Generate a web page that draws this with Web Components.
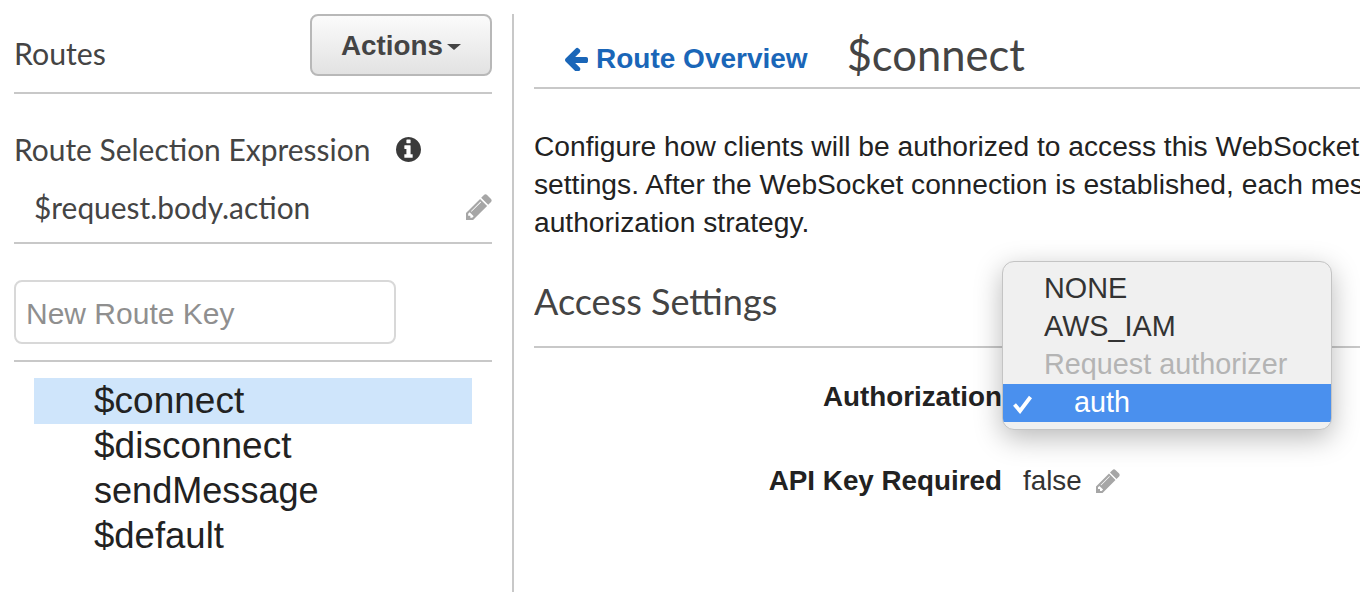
<!DOCTYPE html>
<html><head><meta charset="utf-8">
<style>
html,body{margin:0;padding:0;background:#fff;height:592px;overflow:hidden}
body{font-family:"Liberation Sans",Arial,sans-serif;color:#222}
</style></head>
<body>
<routes-app>
  <route-sidebar slot="side"></route-sidebar>
  <route-detail slot="main"></route-detail>
</routes-app>
<script>
const ICONS={
 pencil:'M491 1536l91-91-235-235-91 91v107h128v128h107zm523-928q0-22-22-22-10 0-17 7l-542 542q-7 7-7 17 0 22 22 22 10 0 17-7l542-542q7-7 7-17zm-54-192l416 416-832 832h-416v-416zm683 96q0 53-37 90l-166 166-416-416 166-165q36-38 90-38 53 0 91 38l235 234q37 39 37 91z',
 info:'M1152 1376v-160q0-14-9-23t-23-9h-96v-512q0-14-9-23t-23-9h-320q-14 0-23 9t-9 23v160q0 14 9 23t23 9h96v320h-96q-14 0-23 9t-9 23v160q0 14 9 23t23 9h448q14 0 23-9t9-23zm-128-896v-160q0-14-9-23t-23-9h-192q-14 0-23 9t-9 23v160q0 14 9 23t23 9h192q14 0 23-9t9-23zm640 416q0 209-103 385.5t-279.5 279.5-385.5 103-385.5-103-279.5-279.5-103-385.5 103-385.5 279.5-279.5 385.5-103 385.5 103 279.5 279.5 103 385.5z',
 left:'M1664 896v128q0 53-32.5 90.5t-84.5 37.5h-704l293 294q38 36 38 90t-38 90l-75 76q-37 37-90 37-52 0-91-37l-651-652q-37-37-37-90 0-52 37-91l651-650q38-38 91-38 52 0 90 38l75 74q38 38 38 91t-38 91l-293 293h704q52 0 84.5 37.5t32.5 90.5z'
};
class FaIcon extends HTMLElement{
 connectedCallback(){
  const s=this.getAttribute('size')||24,c=this.getAttribute('color')||'#a6a6a6',n=this.getAttribute('name');
  this.attachShadow({mode:'open'}).innerHTML=`<style>:host{display:inline-flex;flex:none;width:${s}px;height:${s}px}svg{display:block;width:100%;height:100%}</style><svg viewBox="128 128 1536 1536"><path fill="${c}" d="${ICONS[n]}"/></svg>`;
 }
}
customElements.define('fa-icon',FaIcon);

class RoutesApp extends HTMLElement{
 constructor(){super();this.attachShadow({mode:'open'}).innerHTML=`<style>
 :host{display:flex;height:578px;padding-top:14px;overflow:hidden;width:1360px}
 .side{flex:none;width:478px;margin-left:14px;padding-right:20px;border-right:2px solid #c8c8c8;height:578px}
 .main{flex:1;min-width:0;padding-left:20px}
 </style><div class="side"><slot name="side"></slot></div><div class="main"><slot name="main"></slot></div>`;}
}
customElements.define('routes-app',RoutesApp);

class ActionsButton extends HTMLElement{
 constructor(){super();this.attachShadow({mode:'open'}).innerHTML=`<style>
 :host{display:flex;align-items:center;justify-content:center;gap:4px;box-sizing:border-box;width:182px;height:62px;padding-top:2px;
  border:2px solid #b8b8b8;border-radius:8px;background:linear-gradient(#fbfbfb,#e2e2e2);
  font:bold 27.8px "Liberation Sans",sans-serif;color:#444}
 i{width:0;height:0;border:7.5px solid transparent;border-top:6px solid #444;border-bottom:0;margin-top:2px}
 </style><slot></slot><i></i>`;}
}
customElements.define('actions-button',ActionsButton);

class RouteSidebar extends HTMLElement{
 constructor(){super();this.attachShadow({mode:'open'}).innerHTML=`<style>
 :host{display:block;color:#444;font-family:Lato,sans-serif}
 .top{display:flex;justify-content:space-between;height:78px;border-bottom:2px solid #c8c8c8;}
 .title{font-size:30.3px;line-height:36px;margin-top:21px}
 .rse{display:flex;align-items:center;font-size:29.95px;line-height:36px;margin-top:37px;gap:26px}
 .val{display:flex;justify-content:space-between;align-items:center;height:40px;padding-left:20px;margin-top:20px;font-size:29.9px;padding-bottom:15px;border-bottom:2px solid #c8c8c8}
 .newkey{box-sizing:border-box;display:flex;align-items:center;width:382px;height:64px;margin-top:36px;padding:3px 10px 0;border:2px solid #d8d8d8;border-radius:8px;font:30px "Liberation Sans",sans-serif;color:#8f8f8f}
 .sep{border-bottom:2px solid #c8c8c8;margin-top:16px}
 ul{list-style:none;margin:16px 20px 0;padding:0;font:36.5px/45px "Liberation Sans",sans-serif;color:#222}
 li{padding-left:60px;height:45px}
 li.on{background:#cfe5fb;height:46px;margin-bottom:-1px}
 .w{font-size:37px}
 .n{font-size:36.1px}
 </style>
 <div class="top"><div class="title">Routes</div><actions-button>Actions</actions-button></div>
 <div class="rse"><span>Route Selection Expression</span><fa-icon name="info" size="25" color="#3a3a3a"></fa-icon></div>
 <div class="val"><span>$request.body.action</span><fa-icon name="pencil" size="26"></fa-icon></div>
 <div class="newkey">New Route Key</div>
 <div class="sep"></div>
 <ul><li class="on w">$connect</li><li class="w">$disconnect</li><li class="n">sendMessage</li><li>$default</li></ul>`;}
}
customElements.define('route-sidebar',RouteSidebar);

class SelectMenu extends HTMLElement{
 constructor(){super();this.attachShadow({mode:'open'}).innerHTML=`<style>
 :host{position:absolute;left:-21px;top:-117px;box-sizing:border-box;width:330px;height:169px;padding-top:8px;
  background:#f0f0f0;border:1.5px solid #c4c4c4;border-radius:12px;box-shadow:0 8px 28px rgba(0,0,0,.28);
  font:28.8px/36px "Liberation Sans",sans-serif;color:#333;z-index:5;overflow:hidden}
 div{height:38px;padding-left:41px;white-space:nowrap}
 .dis{color:#b4b4b4}
 .sel{position:relative;background:#4a90ee;color:#fff;padding-left:71px}
 svg{position:absolute;left:9px;top:10px}
 </style>
 <div>NONE</div><div>AWS_IAM</div><div class="dis">Request authorizer</div>
 <div class="sel"><svg width="22" height="20" viewBox="0 0 22 20"><path d="M2.5 10.5l5.5 6.5L18.5 3" fill="none" stroke="#fff" stroke-width="3.8"/></svg>auth</div>`;}
}
customElements.define('select-menu',SelectMenu);

class KvRow extends HTMLElement{
 constructor(){super();this.attachShadow({mode:'open'}).innerHTML=`<style>
 :host{display:grid;grid-template-columns:468px 1fr;column-gap:21px;align-items:center;height:38px;font-size:27.8px}
 .k{font-weight:bold;text-align:right;color:#222;white-space:nowrap}
 .v{position:relative;display:flex;align-items:center;gap:14px;color:#333;height:38px}
 </style><div class="k"><slot name="k"></slot></div><div class="v"><slot></slot></div>`;}
}
customElements.define('kv-row',KvRow);

class RouteDetail extends HTMLElement{
 constructor(){super();this.attachShadow({mode:'open'}).innerHTML=`<style>
 :host{display:block;overflow:hidden;height:578px;color:#222}
 .head{display:flex;align-items:center;height:71px;border-bottom:2px solid #c8c8c8;padding:0 0 2px 30px;box-sizing:content-box}
 a{display:flex;align-items:center;gap:8px;color:#1a66b8;font:bold 28px "Liberation Sans",sans-serif;margin-top:19px;text-decoration:none}
 h1{font:400 43.5px Lato,sans-serif;color:#444;margin:0 0 0 39px;padding-top:8px}
 p{margin:38px 0 0;font-size:28.2px;line-height:38px;white-space:nowrap;color:#222}
 h2{font:400 36px/42px Lato,sans-serif;color:#444;margin:39px 0 0;height:66px;border-bottom:2px solid #c8c8c8}
 kv-row.a{margin-top:30px}
 kv-row.b{margin-top:46px}
 </style>
 <div class="head"><a><fa-icon name="left" size="24" color="#1a66b8"></fa-icon>Route Overview</a><h1>$connect</h1></div>
 <p>Configure how clients will be authorized to access this WebSocket<br>settings. After the WebSocket connection is established, each mes<br>authorization strategy.</p>
 <h2>Access Settings</h2>
 <kv-row class="a"><span slot="k">Authorization</span><select-menu></select-menu></kv-row>
 <kv-row class="b"><span slot="k">API Key Required</span>false<fa-icon name="pencil" size="24"></fa-icon></kv-row>`;}
}
customElements.define('route-detail',RouteDetail);
</script>
</body></html>
